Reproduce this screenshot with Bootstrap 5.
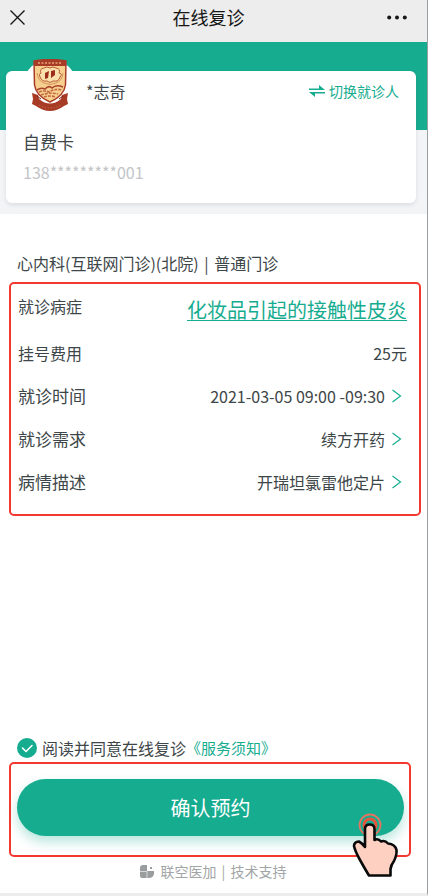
<!DOCTYPE html>
<html lang="zh-CN">
<head>
<meta charset="utf-8">
<meta name="viewport" content="width=device-width, initial-scale=1">
<title>在线复诊</title>
<link href="https://cdn.jsdelivr.net/npm/bootstrap@5.3.0/dist/css/bootstrap.min.css" rel="stylesheet">
<style>
:root { --brand: #16ac90; --frame: #f3392f; --ink: #3d4648; }
body { font-family: "Noto Sans CJK SC", "Noto Sans", sans-serif; font-size: 16px; line-height: 24px; color: var(--ink); background: #fff; }
svg { display: block; flex: none; }
a { color: var(--brand); }
.page { border-right: 1px solid #999fa2; border-bottom: 3px solid #ededed; }
.topbar { height: 42px; padding: 0 20px 8px 10px; background: #ededed; color: #161616; }
.topbar h1 { font-size: 18px; line-height: 24px; }
.topbar .btn { min-width: 24px; }
.hero { padding: 29px 11px 11px 6px; background: linear-gradient(var(--brand) 88px, #f3f4f6 88px); }
.patient { border-radius: 6px; padding: 0 17px 19px; box-shadow: 0 2px 4px rgba(60, 70, 90, .13); }
.avatar { width: 54px; height: 54px; margin-top: -12px; }
.patient-name { padding-left: 9px; }
.switch-link { font-size: 14px; }
.card-kind { font-size: 17px; margin-top: 17px; }
.card-no { color: #c3c5c8; margin-top: 6px; }
.dept { padding: 37px 17px 7px; }
.divider { margin: 0 2px; }
.frame { border: 2px solid var(--frame); border-radius: 5px; }
.details { margin: 0 6px 0 9px; padding: 0 12px 11px 7px; }
.detail-row { min-height: 43px; }
.detail-first { min-height: 47px; padding-top: 10px; }
.disease { font-size: 20px; line-height: 32px; text-underline-offset: 2px; text-decoration-thickness: 1px; }
.wide-label { font-size: 17px; }
.value-btn { gap: 7px; padding: 0 5px 0 0; color: inherit; line-height: 24px; }
.agree { padding: 0 17px 2px; }
.agree .form-check-input { width: 20px; height: 20px; margin: 0 5px 0 0; border: 0; border-radius: 50%; background-color: #e2e5e6; }
.agree .form-check-input:checked { background-color: var(--brand); background-image: url("data:image/svg+xml,%3Csvg xmlns='http://www.w3.org/2000/svg' viewBox='0 0 20 20'%3E%3Cpath fill='none' stroke='%23fff' stroke-width='1.6' stroke-linecap='round' stroke-linejoin='round' d='M5.500 10l3.500 3.500 6-6'/%3E%3C/svg%3E"); }
.agree-link { font-size: 15px; }
.confirm { margin: 0 16px 0 9px; padding: 15px 5px 19px 6px; }
.confirm-btn { min-height: 57px; font-size: 20px; color: #fff; background: var(--brand); box-shadow: 0 6px 12px rgba(22, 172, 144, .3); }
.confirm-btn:hover { color: #fff; background: #12987f; }
.pointer { right: 9px; top: 48px; pointer-events: none; }
.support { gap: 5px; padding: 2px 0 10px; font-size: 14px; color: #a2a5a6; }
</style>
</head>
<body>
<div class="page d-flex flex-column min-vh-100">
  <header class="topbar d-flex align-items-center justify-content-between">
    <button type="button" class="btn p-0 border-0" aria-label="关闭">
      <svg width="15" height="15" viewBox="0 0 15 15" fill="none" stroke="#161616" stroke-width="1.4"><path d="M.5.5l14 14M14.500.5l-14 14"/></svg>
    </button>
    <h1 class="m-0 fw-normal">在线复诊</h1>
    <button type="button" class="btn p-0 border-0 d-flex justify-content-end" aria-label="更多">
      <svg width="20" height="5" viewBox="0 0 20 5" fill="#161616"><circle cx="2.200" cy="2.500" r="2"/><circle cx="10" cy="2.500" r="2"/><circle cx="17.800" cy="2.500" r="2"/></svg>
    </button>
  </header>

  <section class="hero">
    <div class="patient bg-white">
      <div class="d-flex align-items-start">
        <div class="avatar bg-white rounded-circle d-flex justify-content-center flex-shrink-0">
          <svg width="38" height="54" viewBox="0 0 38 54">
            <path d="M3 2Q19-1 35 2L34.500 26Q33 37 19 43Q5 37 3.500 26Z" fill="#f7d08f" stroke="#a83b25" stroke-width="1.500"/>
            <path d="M3 2Q19-1 35 2V7H3Z" fill="#a83b25"/>
            <path d="M7 4H31" stroke="#d98a63" stroke-width="2" stroke-dasharray="2 1.500"/>
            <path d="M13 9Q8 10 10 14Q7 15 9 18Q11 23 16 22Q19 25 22 22Q28 23 29 18Q32 15 28 14Q30 10 25 9Q22 7 19 9Q16 7 13 9Z" fill="#fae0ac" stroke="#b95c38" stroke-width="1"/>
            <path d="M6 14Q7 22 13 24Q19 27 25 24Q31 22 32 14" fill="none" stroke="#c98452" stroke-width=".8"/>
            <path d="M14 14l4-2-1 7-3 1zM20 12l4-1v5l-4 3z" fill="#9c2d1c"/>
            <path d="M6 31Q10 28 14 30Q18 26 21 29Q25 25 32 28" fill="none" stroke="#a8432b" stroke-width="1.600"/>
            <path d="M8 33Q13 31 18 33Q24 29 31 31M10 36Q18 33 27 35M13 38Q19 36 25 38" fill="none" stroke="#c26a42" stroke-width="1.600" stroke-dasharray="3 1"/>
            <path d="M1 34l6 2 1 4Q19 49 30 40l1-4 6-2-1 6 1 5-4 2Q19 57 5 47l-4-2 1-5Z" fill="#a83b25"/>
            <path d="M6 37L10 40M32 37L28 40" stroke="#7d2315"/>
            <path d="M8 46Q19 52 30 46" fill="none" stroke="#b9583f" stroke-width="1.400" stroke-dasharray="1.500 1.500"/>
          </svg>
        </div>
        <div class="flex-grow-1 d-flex justify-content-between pt-2">
          <span class="patient-name">*志奇</span>
          <a href="#" class="switch-link d-flex align-items-center text-decoration-none">
            <svg class="me-1" width="16" height="12" viewBox="0 0 16 12" fill="#16ac90"><path d="M0 3.500H10V0L16 5H0ZM16 7V8.500H6V12L0 7Z"/></svg>切换就诊人
          </a>
        </div>
      </div>
      <div class="card-kind">自费卡</div>
      <div class="card-no">138*********001</div>
    </div>
  </section>

  <main class="d-flex flex-column flex-grow-1">
    <div class="dept">心内科(互联网门诊)(北院) <span class="divider">|</span> 普通门诊</div>
    <section class="details frame">
      <div class="detail-first d-flex justify-content-between align-items-start">
        <span>就诊病症</span><a href="#" class="disease">化妆品引起的接触性皮炎</a>
      </div>
      <div class="detail-row d-flex justify-content-between align-items-center"><span>挂号费用</span><span>25元</span></div>
      <div class="detail-row d-flex justify-content-between align-items-center">
        <span class="wide-label">就诊时间</span>
        <button type="button" class="value-btn btn border-0 d-flex align-items-center">2021-03-05 09:00 -09:30 <svg width="10" height="14" viewBox="0 0 10 14" fill="none" stroke="#16ac90" stroke-width="1.200"><path d="M.5 1l8 6-8 6"/></svg></button>
      </div>
      <div class="detail-row d-flex justify-content-between align-items-center">
        <span class="wide-label">就诊需求</span>
        <button type="button" class="value-btn btn border-0 d-flex align-items-center">续方开药 <svg width="10" height="14" viewBox="0 0 10 14" fill="none" stroke="#16ac90" stroke-width="1.200"><path d="M.5 1l8 6-8 6"/></svg></button>
      </div>
      <div class="detail-row d-flex justify-content-between align-items-center">
        <span class="wide-label">病情描述</span>
        <button type="button" class="value-btn btn border-0 d-flex align-items-center">开瑞坦氯雷他定片 <svg width="10" height="14" viewBox="0 0 10 14" fill="none" stroke="#16ac90" stroke-width="1.200"><path d="M.5 1l8 6-8 6"/></svg></button>
      </div>
    </section>

    <div class="agree d-flex align-items-center mt-auto">
      <input class="form-check-input flex-shrink-0" type="checkbox" id="agree" checked>
      <label for="agree">阅读并同意在线复诊</label><a href="#" class="agree-link text-decoration-none">《服务须知》</a>
    </div>
    <div class="confirm frame position-relative">
      <button type="button" class="confirm-btn btn border-0 rounded-pill w-100">确认预约</button>
      <svg class="pointer position-absolute" width="50" height="66" viewBox="0 0 50 66">
        <circle cx="20" cy="13" r="10.500" fill="none" stroke="#e07562" stroke-width="1.800"/>
        <circle cx="20" cy="13" r="6" fill="none" stroke="#e8553f" stroke-width="3"/>
        <path d="M15 35V17Q15 12.500 19.700 12.500T24.500 17V28Q28 26 31 29.500Q35 28 38 31.500Q45 32 46.500 38Q47 43 44 49Q41 53 40.500 57V63.500H19Q15 57 10 48Q5 39 4 34Q4 30 9 29.500Q12 31 15 35Z" fill="#fdd0c2" stroke="#090909" stroke-width="2.600" stroke-linejoin="round"/>
      </svg>
    </div>
    <footer class="support d-flex justify-content-center align-items-center">
      <svg width="15" height="13" viewBox="0 0 15 13" fill="#9a9d9e"><path d="M0 3Q0 0 3 0H7V6H14V9Q13 13 9 13H2Q0 13 0 11ZM10 2h2v2h-2Z"/><path d="M0 6.500H7V13" fill="none" stroke="#fff" stroke-width=".6"/></svg>
      <span>联空医加 <span class="divider">|</span> 技术支持</span>
    </footer>
  </main>
</div>
<script src="https://cdn.jsdelivr.net/npm/bootstrap@5.3.0/dist/js/bootstrap.bundle.min.js"></script>
</body>
</html>
